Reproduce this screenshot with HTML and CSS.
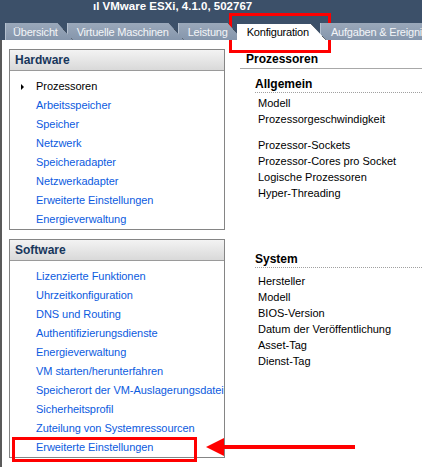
FILE: index.html
```html
<!DOCTYPE html>
<html lang="de">
<head>
<meta charset="utf-8">
<title>VMware ESXi Konfiguration</title>
<link rel="stylesheet" href="styles.css">
</head>
<body>
<div class="window">
  <header class="titlebar"><span class="title">ıl VMware ESXi, 4.1.0, 502767</span></header>
  <nav class="tabs">
    <span class="tab t1">Übersicht</span>
    <span class="tab t2">Virtuelle Maschinen</span>
    <span class="tab t3">Leistung</span>
    <span class="tab active">Konfiguration</span>
    <span class="tab t5">Aufgaben &amp; Ereignisse</span>
  </nav>
  <main class="content">
    <aside class="sidebar">
      <section class="panel">
        <h2 class="panel-head">Hardware</h2>
        <ul class="panel-list hw">
          <li class="current"><span class="bullet"></span>Prozessoren</li>
          <li>Arbeitsspeicher</li>
          <li>Speicher</li>
          <li>Netzwerk</li>
          <li>Speicheradapter</li>
          <li>Netzwerkadapter</li>
          <li>Erweiterte Einstellungen</li>
          <li>Energieverwaltung</li>
        </ul>
      </section>
      <section class="panel">
        <h2 class="panel-head">Software</h2>
        <ul class="panel-list sw">
          <li>Lizenzierte Funktionen</li>
          <li>Uhrzeitkonfiguration</li>
          <li>DNS und Routing</li>
          <li>Authentifizierungsdienste</li>
          <li>Energieverwaltung</li>
          <li>VM starten/herunterfahren</li>
          <li>Speicherort der VM-Auslagerungsdatei</li>
          <li>Sicherheitsprofil</li>
          <li>Zuteilung von Systemressourcen</li>
          <li>Erweiterte Einstellungen</li>
        </ul>
      </section>
    </aside>
    <section class="detail">
      <h1 class="detail-title">Prozessoren</h1>
      <div class="group">
        <h3 class="group-head">Allgemein</h3>
        <ul class="rows">
          <li>Modell</li>
          <li>Prozessorgeschwindigkeit</li>
        </ul>
        <ul class="rows rows-gap">
          <li>Prozessor-Sockets</li>
          <li>Prozessor-Cores pro Socket</li>
          <li>Logische Prozessoren</li>
          <li>Hyper-Threading</li>
        </ul>
      </div>
      <div class="group group-system">
        <h3 class="group-head">System</h3>
        <ul class="rows rows-sys">
          <li>Hersteller</li>
          <li>Modell</li>
          <li>BIOS-Version</li>
          <li>Datum der Veröffentlichung</li>
          <li>Asset-Tag</li>
          <li>Dienst-Tag</li>
        </ul>
      </div>
    </section>
  </main>
  <div class="mark mark-tab"></div>
  <div class="mark mark-item"></div>
  <svg class="arrow" width="152" height="22" viewBox="0 0 152 22">
    <polygon points="0,10 18,1 18,19" fill="#f00"/>
    <rect x="17" y="8" width="132" height="4" fill="#f00"/>
  </svg>
</div>
</body>
</html>
```
FILE: styles.css
```css
* { box-sizing: border-box; }
html, body { margin: 0; padding: 0; }
body {
  width: 422px;
  height: 467px;
  overflow: hidden;
  font-family: "Liberation Sans", Arial, sans-serif;
  font-size: 11px;
  background: #fff;
}
.window {
  position: relative;
  width: 422px;
  height: 467px;
  display: flex;
  flex-direction: column;
}
.titlebar {
  height: 23px;
  background: #3c5069;
  display: flex;
  align-items: flex-start;
}
.title {
  margin-left: 93px;
  color: #fff;
  font-weight: bold;
  font-size: 11.5px;
  line-height: 13px;
  white-space: nowrap;
}
.tabs {
  height: 17px;
  background: #3c5069;
  display: flex;
  align-items: flex-end;
  padding-left: 5px;
  overflow: hidden;
  white-space: nowrap;
}
.tab {
  position: relative;
  height: 17px;
  line-height: 16px;
  padding: 1px 15px 0 7px;
  margin-right: -6px;
  letter-spacing: -0.2px;
  color: #f3f5f8;
  background:
    linear-gradient(to bottom left, transparent calc(50% - 1px), #1a1a1a calc(50% - 1px), #1a1a1a calc(50% + 0.2px), transparent calc(50% + 0.2px)) right top / 15px 17px no-repeat,
    linear-gradient(#9aa8ba, #8596ac);
  clip-path: polygon(0 0, calc(100% - 15px) 0, 100% 100%, 0 100%);
  border-left: 1px solid #b4c0cf;
  flex: none;
}
.t1 { z-index: 5; }
.t2 { z-index: 4; padding-left: 9px; }
.t3 { z-index: 3; padding-left: 9px; }
.t5 { z-index: 1; padding-left: 10px; }
.tab.active {
  z-index: 6;
  height: 16px;
  color: #000;
  background:
    linear-gradient(to bottom left, transparent calc(50% - 1px), #1a1a1a calc(50% - 1px), #1a1a1a calc(50% + 0.2px), transparent calc(50% + 0.2px)) right top / 15px 16px no-repeat,
    #fff;
  padding-left: 9px;
  padding-right: 17px;
  line-height: 15px;
  border-left: 1px solid #fff;
}
.content {
  flex: 1;
  display: flex;
  align-items: flex-start;
  background: #fff;
  border-left: 2px solid #5a5a5a;
  padding: 9px 0 0 7px;
}
.sidebar {
  width: 216px;
  display: flex;
  flex-direction: column;
  gap: 9px;
  flex: none;
}
.panel {
  border: 1px solid #858585;
  background: #fff;
}
.panel-head {
  margin: 0;
  height: 21px;
  line-height: 20px;
  padding-left: 5px;
  font-size: 12px;
  font-weight: bold;
  color: #17365b;
  background: linear-gradient(#f3f3f3, #d9d9d9);
  border-bottom: 1px solid #9a9a9a;
}
.panel-list {
  list-style: none;
  margin: 0;
  padding: 6px 0 0 26px;
  letter-spacing: -0.05px;
}
.panel-list li {
  height: 19px;
  line-height: 19px;
  color: #0c5be0;
  position: relative;
  white-space: nowrap;
}
.panel-list li.current { color: #000; }
.bullet {
  position: absolute;
  left: -15px;
  top: 7px;
  width: 0;
  height: 0;
  border-left: 3px solid #000;
  border-top: 3px solid transparent;
  border-bottom: 3px solid transparent;
}
.detail {
  flex: 1;
  margin-left: 15px;
  padding-top: 2px;
}
.detail-title {
  margin: 0;
  font-size: 12px;
  font-weight: bold;
  line-height: 17px;
  height: 18px;
  padding-left: 6px;
  border-bottom: 1px solid #a8a8a8;
  color: #000;
}
.group {
  margin-left: 15px;
  margin-top: 7px;
}
.group-system { margin-top: 50px; }
.group-head {
  margin: 0;
  font-size: 12px;
  font-weight: bold;
  line-height: 16px;
  height: 17px;
  border-bottom: 1px dotted #a0a0a0;
  color: #000;
}
.rows {
  list-style: none;
  margin: 2px 0 0 0;
  padding: 0 0 0 3px;
}
.rows-gap { margin-top: 10px; }
.rows-sys { margin-top: 5px; }
.rows li {
  height: 16px;
  line-height: 16px;
  color: #000;
  white-space: nowrap;
}
.mark {
  position: absolute;
  border: 3px solid #f00;
}
.mark-tab { left: 229px; top: 13px; width: 102px; height: 40px; }
.mark-item { left: 12px; top: 437px; width: 185px; height: 25px; }
.arrow { position: absolute; left: 206px; top: 437px; }
```
